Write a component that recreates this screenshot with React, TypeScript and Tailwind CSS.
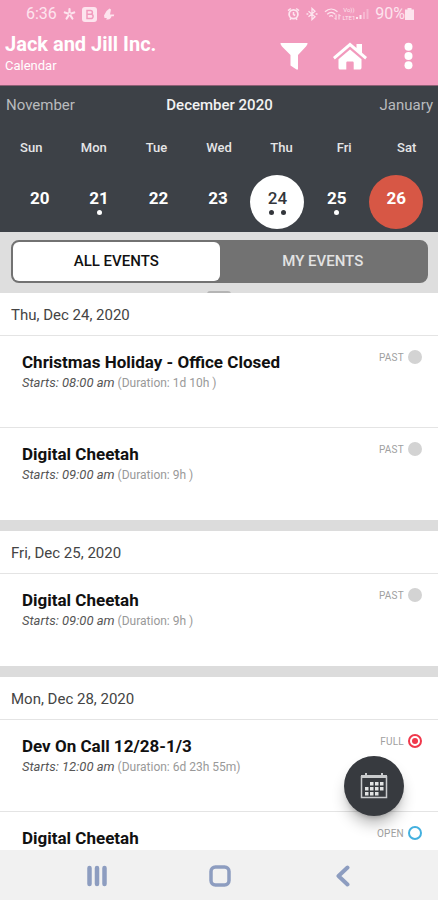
import { clsx } from "clsx";

type Status = "PAST" | "FULL" | "OPEN";

interface CalendarEvent {
  title: string;
  start: string;
  duration: string;
  status: Status;
}

interface EventGroup {
  date: string;
  events: CalendarEvent[];
}

const weekdays = ["Sun", "Mon", "Tue", "Wed", "Thu", "Fri", "Sat"];

const days = [
  { day: 20, dots: 0 },
  { day: 21, dots: 1 },
  { day: 22, dots: 0 },
  { day: 23, dots: 0 },
  { day: 24, dots: 2, selected: true },
  { day: 25, dots: 1 },
  { day: 26, dots: 0, today: true },
];

const groups: EventGroup[] = [
  {
    date: "Thu, Dec 24, 2020",
    events: [
      { title: "Christmas Holiday - Office Closed", start: "08:00 am", duration: "1d 10h ", status: "PAST" },
      { title: "Digital Cheetah", start: "09:00 am", duration: "9h ", status: "PAST" },
    ],
  },
  {
    date: "Fri, Dec 25, 2020",
    events: [{ title: "Digital Cheetah", start: "09:00 am", duration: "9h ", status: "PAST" }],
  },
  {
    date: "Mon, Dec 28, 2020",
    events: [
      { title: "Dev On Call 12/28-1/3", start: "12:00 am", duration: "6d 23h 55m", status: "FULL" },
      { title: "Digital Cheetah", start: "09:00 am", duration: "9h ", status: "OPEN" },
    ],
  },
];

function StatusBar() {
  return (
    <div className="flex h-7 items-center justify-between pl-[26px] pr-6 text-base text-[#fde4ee]">
      <div className="flex items-center gap-1.5">
        <span>6:36</span>
        <svg width="13" height="14" viewBox="0 0 13 14" fill="none" stroke="currentColor" strokeWidth="2.2" strokeLinecap="round" aria-hidden="true">
          <path d="M6.500 2v5M6.500 7L1.800 5.500M6.500 7L11.200 5.500M6.500 7L3.600 11.500M6.500 7L9.400 11.500" />
          <circle cx="6.500" cy="7" r=".6" stroke="#f29abd" strokeWidth=".8" />
        </svg>
        <svg width="15" height="15" viewBox="0 0 15 15" fill="none" aria-hidden="true">
          <rect width="15" height="15" rx="3" fill="currentColor" />
          <path d="M5 3.500h3.500a1.900 1.900 0 0 1 0 3.800H5zM5 7.300h4a2.100 2.100 0 0 1 0 4.200H5z" stroke="#f29abd" strokeWidth="1.500" />
        </svg>
        <svg width="12" height="14" viewBox="0 0 12 14" fill="currentColor" aria-hidden="true">
          <path d="M6.500 1.500L8 2.500 7 7.500h4.200l-.4 1.800H8.500c-.4 2-1.600 3.200-3.600 3.200H3l1-1.500H1.500L1 8.500 3.500 4z" />
        </svg>
      </div>
      <div className="flex items-center">
        <svg className="mr-1.5" width="13" height="14" viewBox="0 0 13 14" fill="none" stroke="currentColor" aria-hidden="true">
          <circle cx="6.500" cy="7.300" r="4.400" strokeWidth="1.800" />
          <path d="M6.500 5v2.500l1.700 1M1 3.700L3.800 1.500M12 3.700L9.200 1.500M3 12.700l1-1.400M10 12.700L9 11.300" strokeWidth="1.500" />
        </svg>
        <svg className="mr-1.5" width="12" height="14" viewBox="0 0 12 14" fill="none" stroke="currentColor" strokeWidth="1.300" aria-hidden="true">
          <path d="M2.500 4.200l6.500 5.600L6 12.600V1.400l3 2.800-6.500 5.600M.5 7h1.800M9.700 7h1.800" />
        </svg>
        <svg className="mr-0.5" width="17" height="14" viewBox="0 0 17 14" fill="none" stroke="currentColor" strokeWidth="1.300" aria-hidden="true">
          <path d="M1 4.800c3.800-3.600 8.700-3.600 12.500 0M3.200 7.200c2.600-2.300 5.500-2.300 8 0M5.300 9.500c1.300-1.100 2.500-1.100 3.700 0" />
          <path d="M12 7.500v5l-1.700-1.700M15 12.500v-5l1.700 1.700" strokeWidth="1" />
        </svg>
        <span className="flex flex-col items-center text-[6px] leading-[8px]">
          <span>Vo))</span>
          <span>LTE1</span>
        </span>
        <svg className="mr-1.5" width="14" height="12" viewBox="0 0 14 12" aria-hidden="true">
          <path d="M1 11V9h2v2zM4.500 11V7h2v4z" fill="currentColor" />
          <path d="M8 11V4h2v7zM11.500 11V1h2v10z" fill="currentColor" opacity=".4" />
        </svg>
        <span>90%</span>
        <svg width="9" height="12" viewBox="0 0 9 12" fill="currentColor" aria-hidden="true">
          <path d="M2.500 0h4v1.500H9V12H0V1.500h2.500z" />
        </svg>
      </div>
    </div>
  );
}

function AppBar() {
  return (
    <div className="flex h-[57px] justify-between pl-[5px] pr-[25px] text-white">
      <div className="pt-1">
        <h1 className="text-xl font-bold leading-6">Jack and Jill Inc.</h1>
        <p className="text-[13px] leading-5">Calendar</p>
      </div>
      <div className="flex items-center gap-[25px] pb-0.5">
        <button type="button" aria-label="Filter">
          <svg width="28" height="28" viewBox="0 0 28 28" fill="currentColor" aria-hidden="true">
            <path d="M.5 1h27c0 1.500-.5 2.300-1.500 3.400L18 13v14.500h-1.500l-6-4V13L2 4.400C1 3.300.5 2.500.5 1z" />
          </svg>
        </button>
        <button type="button" aria-label="Home">
          <svg width="34" height="28" viewBox="0 0 34 28" fill="currentColor" aria-hidden="true">
            <path d="M17 .5L23.500 6V2H29v8.800l5 4.300-1.800 2.400L17 4.600 1.800 17.500 0 15.100z" />
            <path d="M17 7.500l11.500 9.700v8.500c0 1-.8 1.800-1.800 1.800h-6v-6.700c0-.8-.5-1.300-1.300-1.300h-4.800c-.8 0-1.300.5-1.300 1.300v6.700h-6c-1 0-1.800-.8-1.800-1.800v-8.500z" />
          </svg>
        </button>
        <button type="button" aria-label="More options" className="ml-3">
          <svg width="9" height="28" viewBox="0 0 9 28" fill="currentColor" aria-hidden="true">
            <circle cx="4.500" cy="4.800" r="4" />
            <circle cx="4.500" cy="14" r="4" />
            <circle cx="4.500" cy="23.200" r="4" />
          </svg>
        </button>
      </div>
    </div>
  );
}

function WeekPicker() {
  return (
    <section aria-label="Week" className="h-[147px] shrink-0 border-t border-[#8f5f75] bg-[#3d4147] text-white">
      <div className="flex items-center justify-between pl-1.5 pr-[5px] pt-[7px] text-[15px] leading-6">
        <button type="button" className="flex-1 text-left text-[#b9bbbe]">November</button>
        <h2 className="font-medium text-[#f2f2f2]">December 2020</h2>
        <button type="button" className="flex-1 text-right text-[#b9bbbe]">January</button>
      </div>
      <div className="mt-[21px] grid grid-cols-7 text-center text-[13px] font-medium leading-5 text-[#e6e6e7]">
        {weekdays.map((name) => (
          <span key={name}>{name}</span>
        ))}
      </div>
      <div className="mt-[17px] grid grid-cols-7 justify-items-center pl-2.5 pr-3">
        {days.map(({ day, dots, selected, today }) => (
          <button
            key={day}
            type="button"
            aria-pressed={!!selected}
            className={clsx(
              "flex size-[54px] flex-col items-center rounded-full pt-3 text-[17px] leading-[22px]",
              selected ? "bg-white font-medium text-[#33363b]" : "font-bold",
              today && "bg-[#d75745]",
            )}
          >
            {day}
            <span className="flex gap-[7px]">
              {Array.from({ length: dots }, (_, i) => (
                <span key={i} className="mt-px size-[5px] rounded-full bg-current" />
              ))}
            </span>
          </button>
        ))}
      </div>
    </section>
  );
}

function EventFilter() {
  return (
    <div className="relative shrink-0 overflow-hidden bg-[#dedede] pb-[10px] pl-[11px] pr-2.5 pt-2">
      <div className="grid h-[43px] grid-cols-2 rounded-lg border-2 border-[#727272] bg-[#727272] text-[15px] font-medium">
        <button type="button" aria-pressed="true" className="rounded-md bg-white text-[#111111]">ALL EVENTS</button>
        <button type="button" aria-pressed="false" className="text-[#e2e2e2]">MY EVENTS</button>
      </div>
      <div className="absolute -bottom-1 left-1/2 h-1.5 w-6 -translate-x-1/2 rounded-full bg-[#b5b5b5]" />
    </div>
  );
}

function StatusMark({ status }: { status: Status }) {
  if (status === "FULL") {
    return (
      <span className="flex size-3.5 items-center justify-center rounded-full border-2 border-[#f0384b]">
        <span className="size-1.5 rounded-full bg-[#f0384b]" />
      </span>
    );
  }
  return (
    <span
      className={clsx("size-3.5 rounded-full", status === "PAST" ? "bg-[#d3d3d3]" : "border-2 border-[#43b0df]")}
    />
  );
}

function EventRow({ event }: { event: CalendarEvent }) {
  return (
    <li className="flex h-[92px] justify-between border-b border-[#e4e4e4] pl-[22px] pr-4 pt-3.5 last:border-b-0">
      <div>
        <h3 className="text-[17px] font-bold leading-6 text-[#111111]">{event.title}</h3>
        <p className="whitespace-pre text-xs leading-[18px] text-[#999999]">
          <em className="text-[13px] text-[#555555]">Starts: {event.start}</em> ({"Duration: " + event.duration})
        </p>
      </div>
      <div className="flex h-3.5 items-center gap-1 text-[10px] tracking-wide text-[#a0a0a0]">
        {event.status}
        <StatusMark status={event.status} />
      </div>
    </li>
  );
}

function EventList() {
  return (
    <div className="flex h-full flex-col gap-[11px] overflow-y-auto bg-[#dcdcdc] [scrollbar-width:none]">
      {groups.map((group) => (
        <section key={group.date} className="shrink-0 bg-white">
          <h2 className="h-[43px] border-b border-[#e4e4e4] pl-[11px] text-[15px] leading-[44px] text-[#444444]">
            {group.date}
          </h2>
          <ul>
            {group.events.map((event) => (
              <EventRow key={event.title} event={event} />
            ))}
          </ul>
        </section>
      ))}
    </div>
  );
}

function CalendarIcon() {
  const cells = [
    [10, 10], [15, 10], [20, 10],
    [5, 15], [10, 15], [15, 15], [20, 15],
    [5, 20], [10, 20], [15, 20],
  ];
  return (
    <svg width="28" height="28" viewBox="0 0 28 28" fill="none" stroke="#c9cbcd" aria-hidden="true">
      <path d="M1.500 4v21.500h25V4" strokeWidth="1.500" />
      <path d="M1 4.500h26" strokeWidth="3" />
      <path d="M6 1v4M22 1v4" strokeWidth="2" />
      {cells.map(([x, y]) => (
        <rect key={`${x}-${y}`} x={x} y={y} width="3.500" height="3.500" fill="#e2e3e4" stroke="none" />
      ))}
    </svg>
  );
}

function NavigationBar() {
  return (
    <nav aria-label="System" className="flex h-[50px] shrink-0 items-center justify-center gap-[79px] bg-[#f1f1f1] pl-0.5 pt-0.5 text-[#8d9dc0]">
      <button type="button" aria-label="Recent apps" className="flex w-11 justify-center">
        <svg width="20" height="22" viewBox="0 0 20 22" stroke="currentColor" strokeWidth="4.500" strokeLinecap="round" aria-hidden="true">
          <path d="M2.500 3v16M10 3v16M17.500 3v16" />
        </svg>
      </button>
      <button type="button" aria-label="Home" className="flex w-11 justify-center">
        <svg width="22" height="22" viewBox="0 0 22 22" fill="none" stroke="currentColor" strokeWidth="3.500" aria-hidden="true">
          <rect x="2" y="2" width="18" height="18" rx="4.500" />
        </svg>
      </button>
      <button type="button" aria-label="Back" className="flex w-11 justify-center">
        <svg width="14" height="22" viewBox="0 0 14 22" fill="none" stroke="currentColor" strokeWidth="4" strokeLinecap="round" strokeLinejoin="round" aria-hidden="true">
          <path d="M11.500 2.500L2.500 11l9 8.500" />
        </svg>
      </button>
    </nav>
  );
}

export default function App() {
  return (
    <div className="flex h-screen flex-col overflow-hidden bg-white font-['Roboto',sans-serif]">
      <header className="shrink-0 bg-[#f29abd]">
        <StatusBar />
        <AppBar />
      </header>
      <WeekPicker />
      <EventFilter />
      <main className="relative min-h-0 flex-1">
        <EventList />
        <button
          type="button"
          aria-label="Open calendar"
          className="absolute bottom-[34px] right-[34px] flex size-[60px] items-center justify-center rounded-full bg-[#373a3f] shadow-lg shadow-black/30"
        >
          <CalendarIcon />
        </button>
      </main>
      <NavigationBar />
    </div>
  );
}
